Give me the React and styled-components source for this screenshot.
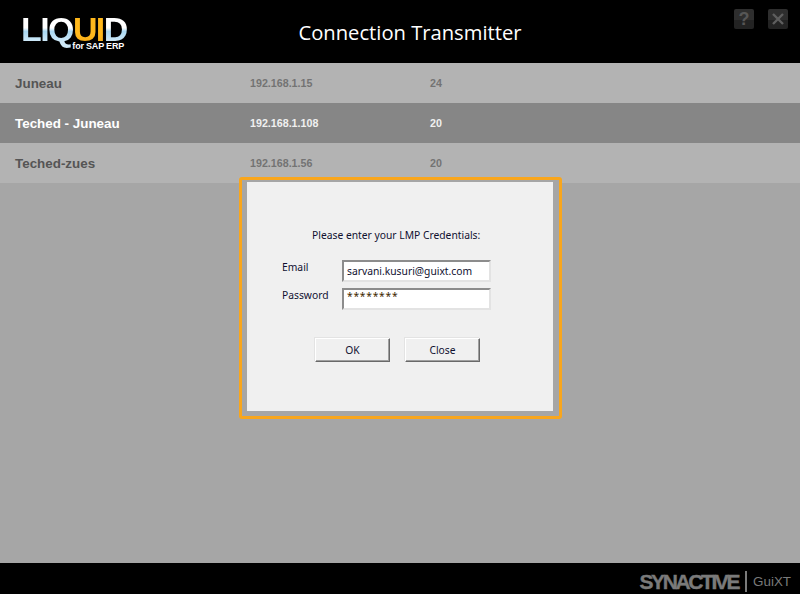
import React from "react";
import styled, { createGlobalStyle } from "styled-components";

const Global = createGlobalStyle`
  html, body { margin: 0; padding: 0; height: 100%; background: #000; }
  #root { height: 100%; }
`;

const Page = styled.div`
  position: relative;
  width: 800px;
  height: 594px;
  display: flex;
  flex-direction: column;
  overflow: hidden;
  background: #a6a6a6;
  font-family: "Liberation Sans", Arial, sans-serif;
`;

const Header = styled.header`
  height: 63px;
  flex: none;
  background: #000;
  display: grid;
  grid-template-columns: 210px 1fr 190px;
  align-items: start;
`;

const Logo = styled.div`
  padding: 16px 0 0 21px;
  width: 106px;
  display: flex;
  flex-direction: column;
`;

const LogoMark = styled.div`
  display: flex;
  font-size: 34px;
  font-weight: 700;
  line-height: 26px;
  height: 26px;
  letter-spacing: -1.6px;
  white-space: nowrap;
`;

const LogoPart = styled.span`
  height: 34px;
  background: ${(p) =>
    p.$accent
      ? "linear-gradient(#ffb81c 0 55%, #f0a010 100%)"
      : "linear-gradient(#ffffff 0 35%, #a9d8f2 45%, #cfe9f8 75%)"};
  -webkit-background-clip: text;
  background-clip: text;
  color: transparent;
`;

const LogoSub = styled.div`
  align-self: flex-end;
  margin-right: 3px;
  color: #fff;
  font-size: 9px;
  font-weight: 700;
  line-height: 8px;
  letter-spacing: -0.2px;
  white-space: nowrap;
`;

const Title = styled.h1`
  margin: 17px 0 0;
  text-align: center;
  color: #fff;
  font-family: "Open Sans", sans-serif;
  font-size: 20.2px;
  font-weight: 400;
  line-height: 30px;
`;

const WindowButtons = styled.div`
  display: flex;
  justify-content: flex-end;
  gap: 14px;
  padding: 9px 12px 0 0;
`;

const WindowButton = styled.div`
  width: 20px;
  height: 20px;
  box-sizing: border-box;
  border-radius: 2px;
  background: linear-gradient(#2e2e2e 0 55%, #232323 55% 100%);
  color: #565656;
  display: flex;
  align-items: center;
  justify-content: center;
  font-size: 18px;
  font-weight: 700;
`;

const Main = styled.main`
  flex: 1;
  background: #a6a6a6;
`;

const Row = styled.div`
  height: 40px;
  display: grid;
  grid-template-columns: 250px 180px 1fr;
  align-items: center;
  background: ${(p) => (p.$selected ? "#868686" : "#b3b3b3")};
  color: ${(p) => (p.$selected ? "#f0f0f0" : "#737373")};
  font-weight: 700;
  font-size: 10.7px;
`;

const RowName = styled.div`
  padding-left: 15px;
  font-size: 13.4px;
  color: ${(p) => (p.$selected ? "#ffffff" : "#555555")};
`;

const Footer = styled.footer`
  height: 31px;
  flex: none;
  background: #000;
  display: flex;
  justify-content: flex-end;
  align-items: center;
  padding: 7px 9px 0 0;
  box-sizing: border-box;
  color: #7a7a7a;
`;

const Brand = styled.span`
  font-size: 21px;
  font-weight: 700;
  letter-spacing: -2.4px;
  line-height: 24px;
  -webkit-text-stroke: 0.4px #7a7a7a;
`;

const BrandRule = styled.span`
  width: 2px;
  height: 21px;
  background: #7a7a7a;
  margin: -2px 6px 0 7px;
`;

const BrandSub = styled.span`
  font-size: 13.4px;
  line-height: 24px;
`;

const Dialog = styled.div`
  position: absolute;
  left: 239px;
  top: 177px;
  width: 323px;
  height: 242px;
  box-sizing: border-box;
  border: 3px solid #f9a61c;
  border-radius: 3px;
  padding: 2px 6px 5px 5px;
  background: #a6a6a6;
  display: flex;
`;

const Panel = styled.div`
  flex: 1;
  background: #f0f0f0;
  color: #101030;
  font-family: "Noto Sans", sans-serif;
  font-size: 10.3px;
  display: flex;
  flex-direction: column;
`;

const Prompt = styled.div`
  margin-top: 45px;
  height: 16px;
  line-height: 16px;
  padding-left: 65px;
  white-space: nowrap;
`;

const Form = styled.div`
  margin-top: 17px;
  padding-left: 35px;
  display: grid;
  grid-template-columns: 60px 149px;
  grid-auto-rows: 28px;
`;

const FieldLabel = styled.label`
  line-height: 14px;
`;

const Input = styled.div`
  width: 149px;
  height: 22px;
  box-sizing: border-box;
  background: #fff;
  border: 2px solid #e3e3e3;
  border-top-color: #8c8c8c;
  border-left-color: #8c8c8c;
  padding-left: 3px;
  line-height: ${(p) => (p.$masked ? "13px" : "18px")};
  white-space: nowrap;
  color: ${(p) => (p.$masked ? "#402800" : "#101030")};
  letter-spacing: ${(p) => (p.$masked ? "0.75px" : "0")};
`;

const Actions = styled.div`
  margin-top: 22px;
  padding-left: 68px;
  display: flex;
  gap: 15px;
`;

const Button = styled.div`
  width: 75px;
  height: 24px;
  box-sizing: border-box;
  background: #f0f0f0;
  border: 1px solid;
  border-color: #fff #696969 #696969 #fff;
  box-shadow: inset -1px -1px 0 #a0a0a0, -1px -1px 0 #e3e3e3;
  display: flex;
  align-items: center;
  justify-content: center;
`;

const servers = [
  { name: "Juneau", ip: "192.168.1.15", port: 24 },
  { name: "Teched - Juneau", ip: "192.168.1.108", port: 20, selected: true },
  { name: "Teched-zues", ip: "192.168.1.56", port: 20 },
];

export default function App() {
  return (
    <Page>
      <Global />
      <Header>
        <Logo>
          <LogoMark>
            <LogoPart>LIQ</LogoPart>
            <LogoPart $accent>UI</LogoPart>
            <LogoPart>D</LogoPart>
          </LogoMark>
          <LogoSub>for SAP ERP</LogoSub>
        </Logo>
        <Title>Connection Transmitter</Title>
        <WindowButtons>
          <WindowButton>?</WindowButton>
          <WindowButton>
            <svg width="14" height="14" viewBox="0 0 14 14">
              <path d="M2 2L12 12M12 2L2 12" stroke="#5e5e5e" strokeWidth="2.4" />
            </svg>
          </WindowButton>
        </WindowButtons>
      </Header>
      <Main>
        {servers.map((s) => (
          <Row key={s.name} $selected={s.selected}>
            <RowName $selected={s.selected}>{s.name}</RowName>
            <div>{s.ip}</div>
            <div>{s.port}</div>
          </Row>
        ))}
      </Main>
      <Footer>
        <Brand>SYNACTIVE</Brand>
        <BrandRule />
        <BrandSub>GuiXT</BrandSub>
      </Footer>
      <Dialog>
        <Panel>
          <Prompt>Please enter your LMP Credentials:</Prompt>
          <Form>
            <FieldLabel>Email</FieldLabel>
            <Input>sarvani.kusuri@guixt.com</Input>
            <FieldLabel>Password</FieldLabel>
            <Input $masked>********</Input>
          </Form>
          <Actions>
            <Button>OK</Button>
            <Button>Close</Button>
          </Actions>
        </Panel>
      </Dialog>
    </Page>
  );
}
